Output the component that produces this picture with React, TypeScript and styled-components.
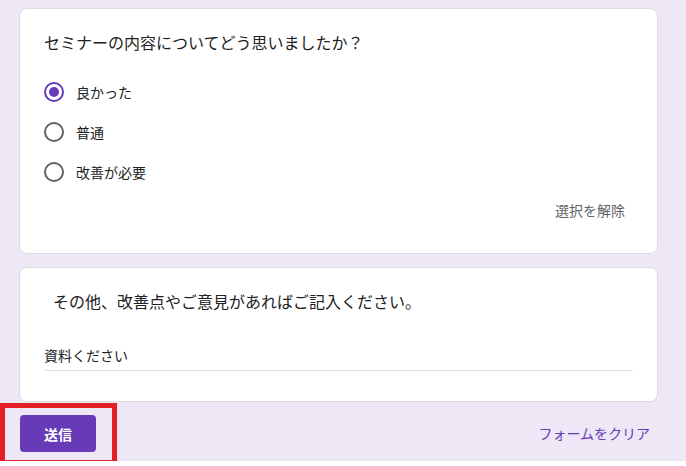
import React, { useState } from "react";
import styled, { createGlobalStyle } from "styled-components";

const Global = createGlobalStyle`
  html, body { margin: 0; padding: 0; background: #ffffff; }
  body { font-family: Roboto, "Noto Sans CJK JP", sans-serif; color: #202124; }
  * { box-sizing: border-box; }
`;

const Page = styled.div`
  position: relative;
  width: 686px;
  height: 461px;
  background: #ede7f6;
  padding: 8px 28px 0 19px;
  display: flex;
  flex-direction: column;
  gap: 13px;
`;

const Card = styled.section<{ $pb: number }>`
  background: #ffffff;
  border: 1px solid #dadce0;
  border-radius: 8px;
  padding: 23px 24px ${(p) => p.$pb}px 24px;
  display: flex;
  flex-direction: column;
`;

const Question = styled.div<{ $indent?: number }>`
  font-size: 16px;
  line-height: 24px;
  letter-spacing: 0;
  padding-left: ${(p) => p.$indent ?? 0}px;
  color: #202124;
`;

const Options = styled.div`
  margin-top: 16px;
  display: flex;
  flex-direction: column;
`;

const OptionRow = styled.label`
  height: 40px;
  display: flex;
  align-items: center;
  gap: 12px;
  cursor: pointer;
  font-size: 14px;
  color: #202124;
`;

const Radio = styled.span<{ $checked: boolean }>`
  width: 20px;
  height: 20px;
  border-radius: 50%;
  border: 2px solid ${(p) => (p.$checked ? "#673ab7" : "#5f6368")};
  display: flex;
  align-items: center;
  justify-content: center;
  flex: none;
  &::after {
    content: "";
    width: 10px;
    height: 10px;
    border-radius: 50%;
    background: #673ab7;
    display: ${(p) => (p.$checked ? "block" : "none")};
  }
`;

const ClearRow = styled.div`
  margin-top: 8px;
  display: flex;
  justify-content: flex-end;
`;

const TextButton = styled.button<{ $color: string }>`
  border: none;
  background: transparent;
  font-family: inherit;
  font-size: 14px;
  line-height: 22px;
  padding: 0 8px;
  color: ${(p) => p.$color};
  cursor: pointer;
`;

const AnswerField = styled.div`
  margin-top: 31px;
  font-size: 14px;
  line-height: 20px;
  padding-bottom: 4px;
  border-bottom: 1px solid #e0e0e0;
  color: #202124;
`;

const Footer = styled.div`
  display: flex;
  align-items: center;
  justify-content: space-between;
  padding-left: 1px;
`;

const Submit = styled.button`
  width: 76px;
  height: 37px;
  border: none;
  border-radius: 4px;
  background: #673ab7;
  color: #ffffff;
  font-family: inherit;
  font-weight: 700;
  font-size: 14px;
  cursor: pointer;
`;

const Highlight = styled.div`
  position: absolute;
  left: 0;
  top: 403px;
  width: 117px;
  height: 62px;
  border: 5px solid #e31e24;
  pointer-events: none;
`;

const options = ["良かった", "普通", "改善が必要"];

export default function App() {
  const [sel, setSel] = useState(0);
  return (
    <>
      <Global />
      <Page>
        <Card $pb={31}>
          <Question>セミナーの内容についてどう思いましたか？</Question>
          <Options>
            {options.map((o, i) => (
              <OptionRow key={o} onClick={() => setSel(i)}>
                <Radio $checked={sel === i} />
                <span>{o}</span>
              </OptionRow>
            ))}
          </Options>
          <ClearRow>
            <TextButton $color="#5f6368">選択を解除</TextButton>
          </ClearRow>
        </Card>
        <Card $pb={30}>
          <Question $indent={9}>その他、改善点やご意見があればご記入ください。</Question>
          <AnswerField>資料ください</AnswerField>
        </Card>
        <Footer>
          <Submit>送信</Submit>
          <TextButton $color="#673ab7">フォームをクリア</TextButton>
        </Footer>
        <Highlight />
      </Page>
    </>
  );
}
